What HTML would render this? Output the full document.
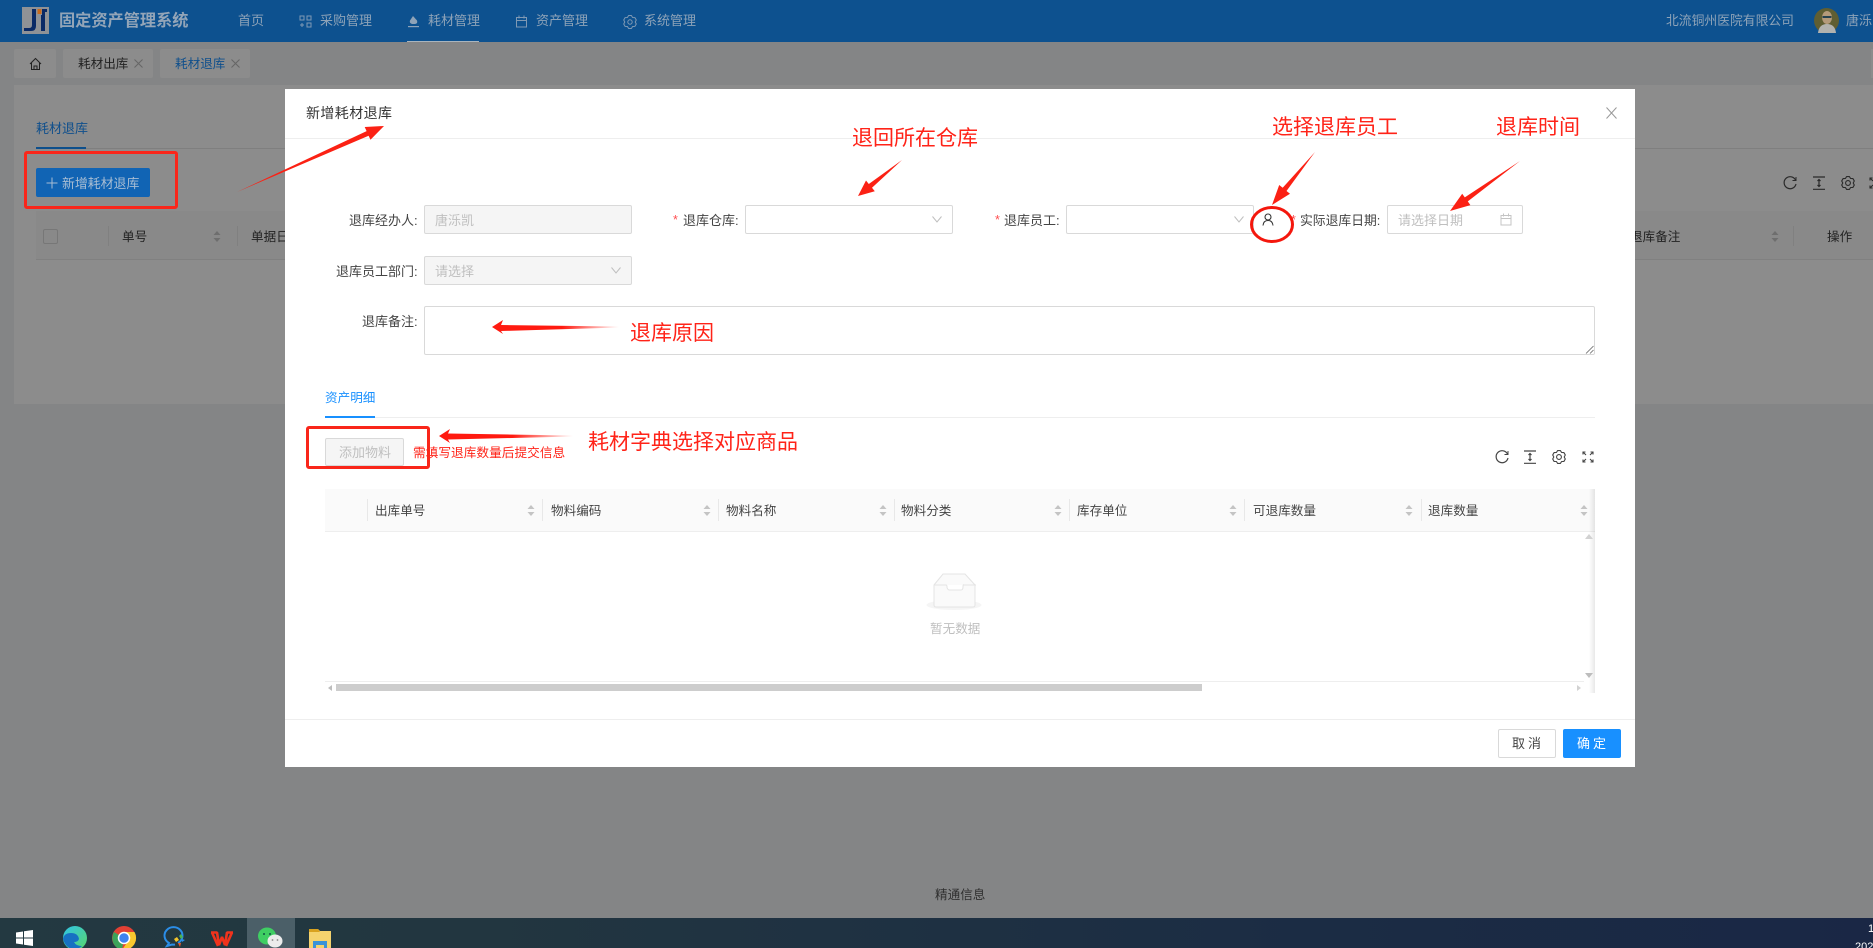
<!DOCTYPE html>
<html lang="zh"><head><meta charset="utf-8"><title>新增耗材退库</title>
<style>
html,body{margin:0;padding:0;width:1873px;height:948px;overflow:hidden}
body{background:#848586}
#w{position:absolute;left:0;top:0;width:1873px;height:948px;overflow:hidden;background:#848586;font-family:"Liberation Sans","Noto Sans CJK SC",sans-serif;font-size:12.6px;color:#333;filter:blur(.3px)}
.a{position:absolute;box-sizing:border-box}
.t{position:absolute;white-space:nowrap;line-height:16px;height:16px}
.n{color:#8ea3b8;font-size:13px}
.b{color:#3a3a3a}
.ctl{position:absolute;box-sizing:border-box;border:1px solid #d9d9d9;border-radius:2px;background:#fff}
.dis{background:#f5f5f5}
.m{color:#444;font-size:13px}
.r{color:#ff2318;font-size:21px;line-height:26px;height:26px}
.ph{color:#bfbfbf;font-size:13px}
.s{color:#ff4d4f}
svg{position:absolute;overflow:visible}
</style></head><body><div id="w">

<!-- header -->
<div class="a" style="left:0;top:0;width:1873px;height:42px;background:#0d518f"></div>
<svg style="left:22px;top:7px" width="27" height="27" viewBox="0 0 27 27"><rect width="27" height="27" fill="#8f9296"/><path d="M10 2h4v17q0 5-5 5H2v-3h5q3 0 3-3z" fill="#0a2a66"/><rect x="15.500" y="2" width="4" height="5" fill="#c96a1c"/><path d="M20 2h5v3h-2v19h-4V8h1z" fill="#0a2a66"/></svg>
<div class="t" style="left:59px;top:13px;font-size:16.200px;font-weight:bold;color:#93a5b8">固定资产管理系统</div>
<div class="t n" style="left:238px;top:13px">首页</div>
<svg style="left:299px;top:15px" width="13" height="13" viewBox="0 0 13 13" fill="none" stroke="#7f99b4"><rect x="1" y="1" width="4" height="4"/><rect x="8" y="1" width="4" height="4"/><rect x="8" y="8" width="4" height="4"/><path d="M1 10h4M3 8v4"/></svg>
<div class="t n" style="left:320px;top:13px">采购管理</div>
<svg style="left:407px;top:15px" width="13" height="13" viewBox="0 0 13 13" fill="#8ea3b8"><path d="M6 1l4 4.500q1 3-2 3.500H5Q2 8 3 5.500z"/><rect x="1" y="11" width="11" height="1.200"/></svg>
<div class="t n" style="left:428px;top:13px">耗材管理</div>
<div class="a" style="left:407px;top:41px;width:72px;height:1px;background:#a9b4bd"></div>
<svg style="left:515px;top:15px" width="13" height="13" viewBox="0 0 13 13" fill="none" stroke="#7f99b4"><rect x="1.500" y="2.500" width="10" height="9.500"/><path d="M1.500 5.500h10M4 .5v3M9 .5v3"/></svg>
<div class="t n" style="left:536px;top:13px">资产管理</div>
<svg style="left:623px;top:15px" width="14" height="14" viewBox="0 0 14 14" fill="none" stroke="#7f99b4" stroke-linejoin="round"><path d="M5.630.54H8.370L9.600 2.500 11.900 2.580 13.280 4.960 12.200 7 13.280 9.040 11.900 11.420 9.600 11.500 8.370 13.460H5.630L4.400 11.500 2.100 11.420.72 9.040 1.800 7 .72 4.960 2.100 2.580 4.400 2.500Z"/><circle cx="7" cy="7" r="2.200"/></svg>
<div class="t n" style="left:644px;top:13px">系统管理</div>
<div class="t n" style="left:1666px;top:13px;font-size:12.800px">北流铜州医院有限公司</div>
<svg style="left:1814px;top:8px" width="25" height="25" viewBox="0 0 25 25"><ellipse cx="12.500" cy="12.500" rx="12.500" ry="12.500" fill="#5f5e32"/><ellipse cx="13" cy="9.500" rx="5" ry="6.500" fill="#b49a7a"/><rect x="8.500" y="8" width="9" height="2" fill="#26424f"/><path d="M4 25q1-9 9-9t9 9z" fill="#b2b2ae"/></svg>
<div class="t n" style="left:1846px;top:13px">唐泺凯</div>

<!-- tabs -->
<div class="a" style="left:14px;top:49px;width:42px;height:29px;background:#8c8c8c;border-radius:2px"></div>
<svg style="left:29px;top:57px" width="13" height="14" viewBox="0 0 13 14" fill="none" stroke="#222"><path d="M1 7l5.500-5.500L12 7M2.500 6v6.500h8V6M5 12.500V9h3v3.500"/></svg>
<div class="a" style="left:63px;top:49px;width:90px;height:29px;background:#8c8c8c;border-radius:2px"></div>
<div class="t b" style="left:78px;top:56px;color:#222">耗材出库</div>
<svg style="left:134px;top:59px" width="9" height="9" fill="none" stroke="#666"><path d="M.5.5l8 8M8.500.5l-8 8"/></svg>
<div class="a" style="left:160px;top:49px;width:90px;height:29px;background:#8c8c8c;border-radius:2px"></div>
<div class="t" style="left:175px;top:56px;color:#0f4f8c">耗材退库</div>
<svg style="left:231px;top:59px" width="9" height="9" fill="none" stroke="#666"><path d="M.5.5l8 8M8.500.5l-8 8"/></svg>
<div class="a" style="left:1871px;top:49px;width:2px;height:29px;background:#8c8c8c"></div>

<!-- background panel -->
<div class="a" style="left:14px;top:85px;width:1859px;height:319px;background:#8c8c8c"></div>
<div class="t" style="left:36px;top:121px;color:#0f4f8c;font-size:13px">耗材退库</div>
<div class="a" style="left:36px;top:148px;width:1837px;height:1px;background:#7f7f7f"></div>
<div class="a" style="left:36px;top:147px;width:50px;height:2px;background:#0d4f8c"></div>
<div class="a" style="left:36px;top:168px;width:114px;height:29px;background:#1164b4;border-radius:2px"></div>
<svg style="left:46px;top:177px" width="12" height="12" fill="none" stroke="#a8bdd3"><path d="M6 .5v11M.5 6h11"/></svg>
<div class="t" style="left:62px;top:176px;color:#a8bdd3;font-size:12.900px">新增耗材退库</div>
<div class="a" style="left:36px;top:211px;width:1837px;height:49px;background:#898989;border-bottom:1px solid #808080"></div>
<div class="a" style="left:43px;top:229px;width:15px;height:15px;border:1px solid #777;border-radius:2px"></div>
<div class="a" style="left:108px;top:226px;width:1px;height:20px;background:#808080"></div>
<div class="t" style="left:122px;top:229px;color:#222">单号</div>
<svg style="left:213px;top:230px" width="8" height="13" fill="#6e6e6e"><path d="M4 1l3.500 4H.5zM4 12l3.500-4H.5z"/></svg>
<div class="a" style="left:237px;top:226px;width:1px;height:20px;background:#808080"></div>
<div class="t" style="left:251px;top:229px;color:#222">单据日期</div>
<div class="t" style="left:1630px;top:229px;color:#222">退库备注</div>
<svg style="left:1771px;top:230px" width="8" height="13" fill="#6e6e6e"><path d="M4 1l3.500 4H.5zM4 12l3.500-4H.5z"/></svg>
<div class="a" style="left:1793px;top:226px;width:1px;height:20px;background:#808080"></div>
<div class="t" style="left:1827px;top:229px;color:#222">操作</div>
<svg style="left:1783px;top:176px" width="14" height="14" viewBox="0 0 14 14" fill="none" stroke="#2a2a2a" stroke-width="1.200"><path d="M12.500 4A6 6 0 1 0 13 8"/><path d="M13 1v3.500H9.500" stroke-width="1"/></svg>
<svg style="left:1812px;top:176px" width="14" height="14" viewBox="0 0 14 14" fill="none" stroke="#2a2a2a" stroke-width="1.200"><path d="M1 1h12M1 13.300h12M7 3.500v7M5.500 5L7 3.500 8.500 5M5.500 9L7 10.500 8.500 9"/></svg>
<svg style="left:1841px;top:176px" width="14" height="14" viewBox="0 0 14 14" fill="none" stroke="#2a2a2a" stroke-width="1.100" stroke-linejoin="round"><path d="M5.630.54H8.370L9.600 2.500 11.900 2.580 13.280 4.960 12.200 7 13.280 9.040 11.900 11.420 9.600 11.500 8.370 13.460H5.630L4.400 11.500 2.100 11.420.72 9.040 1.800 7 .72 4.960 2.100 2.580 4.400 2.500Z"/><circle cx="7" cy="7" r="2.400"/></svg>
<svg style="left:1869px;top:177px" width="12" height="12" viewBox="0 0 12 12" fill="none" stroke="#2a2a2a" stroke-width="1.100"><path d="M1 1l3 3M1 11l3-3M1 3.500V1h2.500M1 8.500V11h2.500"/></svg>
<div class="t" style="left:935px;top:887px;color:#2f2f2f">精通信息</div>

<!-- modal -->
<div class="a" style="left:285px;top:89px;width:1350px;height:678px;background:#fff"></div>
<div class="a" style="left:285px;top:138px;width:1350px;height:1px;background:#eee"></div>
<div class="t b" style="left:306px;top:105px;font-size:14px;color:#333;letter-spacing:.4px">新增耗材退库</div>
<svg style="left:1606px;top:107px" width="11" height="12" fill="none" stroke="#999"><path d="M.5.5l10 11M10.500.5l-10 11"/></svg>

<div class="t m" style="left:349px;top:213px">退库经办人:</div>
<div class="ctl dis" style="left:424px;top:205px;width:208px;height:29px"></div>
<div class="t ph" style="left:435px;top:213px">唐泺凯</div>
<div class="t s" style="left:673px;top:212px">*</div>
<div class="t m" style="left:683px;top:213px">退库仓库:</div>
<div class="ctl" style="left:745px;top:205px;width:208px;height:29px"></div>
<svg style="left:932px;top:216px" width="10" height="7" fill="none" stroke="#bfbfbf"><path d="M.5.5L5 6 9.500.5"/></svg>
<div class="t s" style="left:995px;top:212px">*</div>
<div class="t m" style="left:1004px;top:213px">退库员工:</div>
<div class="ctl" style="left:1066px;top:205px;width:188px;height:29px"></div>
<svg style="left:1234px;top:216px" width="10" height="7" fill="none" stroke="#bfbfbf"><path d="M.5.5L5 6 9.500.5"/></svg>
<svg style="left:1262px;top:213px" width="12" height="13" viewBox="0 0 12 13" fill="none" stroke="#333" stroke-width="1.100"><circle cx="6" cy="4" r="3"/><path d="M1 12.500Q1.500 7.500 6 7.500t5 5"/></svg>
<div class="t s" style="left:1291px;top:212px">*</div>
<div class="t m" style="left:1300px;top:213px;font-size:12.800px">实际退库日期:</div>
<div class="ctl" style="left:1387px;top:205px;width:136px;height:29px"></div>
<div class="t ph" style="left:1398px;top:213px">请选择日期</div>
<svg style="left:1500px;top:213px" width="12" height="13" viewBox="0 0 12 13" fill="none" stroke="#c4c4c4"><rect x="1" y="2.500" width="10" height="9.500"/><path d="M1 5.500h10M3.500.5v3M8.500.5v3"/></svg>

<div class="t m" style="left:336px;top:264px">退库员工部门:</div>
<div class="ctl dis" style="left:424px;top:256px;width:208px;height:29px"></div>
<div class="t ph" style="left:435px;top:264px">请选择</div>
<svg style="left:611px;top:267px" width="10" height="7" fill="none" stroke="#bfbfbf"><path d="M.5.5L5 6 9.500.5"/></svg>

<div class="t m" style="left:362px;top:314px">退库备注:</div>
<div class="ctl" style="left:424px;top:306px;width:1171px;height:49px"></div>
<svg style="left:1585px;top:345px" width="9" height="9" fill="none" stroke="#666" stroke-width=".8"><path d="M1 8.500L8.500 1M5 8.500L8.500 5"/></svg>

<div class="t" style="left:325px;top:390px;color:#1890ff">资产明细</div>
<div class="a" style="left:325px;top:417px;width:1270px;height:1px;background:#eee"></div>
<div class="a" style="left:325px;top:416px;width:50px;height:2px;background:#1890ff"></div>
<div class="ctl dis" style="left:325px;top:438px;width:79px;height:28px"></div>
<div class="t ph" style="left:339px;top:445px">添加物料</div>
<div class="t" style="left:413px;top:445px;color:#ff2318;font-size:12.700px">需填写退库数量后提交信息</div>
<svg style="left:1495px;top:450px" width="14" height="14" viewBox="0 0 14 14" fill="none" stroke="#444" stroke-width="1.200"><path d="M12.500 4A6 6 0 1 0 13 8"/><path d="M13 1v3.500H9.500" stroke-width="1"/></svg>
<svg style="left:1523px;top:450px" width="14" height="14" viewBox="0 0 14 14" fill="none" stroke="#444" stroke-width="1.200"><path d="M1 1h12M1 13.300h12M7 3.500v7M5.500 5L7 3.500 8.500 5M5.500 9L7 10.500 8.500 9"/></svg>
<svg style="left:1552px;top:450px" width="14" height="14" viewBox="0 0 14 14" fill="none" stroke="#444" stroke-width="1.100" stroke-linejoin="round"><path d="M5.630.54H8.370L9.600 2.500 11.900 2.580 13.280 4.960 12.200 7 13.280 9.040 11.900 11.420 9.600 11.500 8.370 13.460H5.630L4.400 11.500 2.100 11.420.72 9.040 1.800 7 .72 4.960 2.100 2.580 4.400 2.500Z"/><circle cx="7" cy="7" r="2.400"/></svg>
<svg style="left:1582px;top:451px" width="12" height="12" viewBox="0 0 12 12" fill="none" stroke="#444" stroke-width="1.100"><path d="M1 1l3 3M11 1L8 4M1 11l3-3M11 11L8 8M1 3.500V1h2.500M11 3.500V1H8.500M1 8.500V11h2.500M11 8.500V11H8.500"/></svg>

<!-- detail table -->
<div class="a" style="left:325px;top:489px;width:1270px;height:43px;background:#fafafa;border-bottom:1px solid #eee"></div>
<div class="a" style="left:1589px;top:489px;width:6px;height:204px;background:linear-gradient(90deg,rgba(0,0,0,0),rgba(0,0,0,.09))"></div>
<div class="t" style="left:375px;top:503px;color:#444">出库单号</div>
<div class="t" style="left:551px;top:503px;color:#444">物料编码</div>
<div class="t" style="left:726px;top:503px;color:#444">物料名称</div>
<div class="t" style="left:901px;top:503px;color:#444">物料分类</div>
<div class="t" style="left:1077px;top:503px;color:#444">库存单位</div>
<div class="t" style="left:1253px;top:503px;color:#444">可退库数量</div>
<div class="t" style="left:1428px;top:503px;color:#444">退库数量</div>
<div class="a" style="left:367px;top:499px;width:1px;height:22px;background:#e8e8e8"></div>
<div class="a" style="left:542px;top:499px;width:1px;height:22px;background:#e8e8e8"></div>
<div class="a" style="left:718px;top:499px;width:1px;height:22px;background:#e8e8e8"></div>
<div class="a" style="left:894px;top:499px;width:1px;height:22px;background:#e8e8e8"></div>
<div class="a" style="left:1069px;top:499px;width:1px;height:22px;background:#e8e8e8"></div>
<div class="a" style="left:1244px;top:499px;width:1px;height:22px;background:#e8e8e8"></div>
<div class="a" style="left:1421px;top:499px;width:1px;height:22px;background:#e8e8e8"></div>
<svg style="left:527px;top:504px" width="8" height="13" fill="#c4c4c4"><path d="M4 1l3.500 4H.5zM4 12l3.500-4H.5z"/></svg>
<svg style="left:703px;top:504px" width="8" height="13" fill="#c4c4c4"><path d="M4 1l3.500 4H.5zM4 12l3.500-4H.5z"/></svg>
<svg style="left:879px;top:504px" width="8" height="13" fill="#c4c4c4"><path d="M4 1l3.500 4H.5zM4 12l3.500-4H.5z"/></svg>
<svg style="left:1054px;top:504px" width="8" height="13" fill="#c4c4c4"><path d="M4 1l3.500 4H.5zM4 12l3.500-4H.5z"/></svg>
<svg style="left:1229px;top:504px" width="8" height="13" fill="#c4c4c4"><path d="M4 1l3.500 4H.5zM4 12l3.500-4H.5z"/></svg>
<svg style="left:1405px;top:504px" width="8" height="13" fill="#c4c4c4"><path d="M4 1l3.500 4H.5zM4 12l3.500-4H.5z"/></svg>
<svg style="left:1580px;top:504px" width="8" height="13" fill="#c4c4c4"><path d="M4 1l3.500 4H.5zM4 12l3.500-4H.5z"/></svg>

<svg style="left:926px;top:572px" width="56" height="40" viewBox="0 0 56 40"><ellipse cx="28" cy="33" rx="27.500" ry="5" fill="#f5f5f5"/><path d="M8 13L17 2h22l10 11v20q0 2-2 2H10q-2 0-2-2z" fill="#fafafa" stroke="#e4e4e4"/><path d="M8 13h12q1 0 1 2t2 3h12q2 0 2-3t1-2h12" fill="#fff" stroke="#e4e4e4"/></svg>
<div class="t" style="left:930px;top:621px;color:#bfbfbf">暂无数据</div>
<svg style="left:1585px;top:534px" width="8" height="5" fill="#d2d2d2"><path d="M4 0l4 5H0z"/></svg>
<svg style="left:1585px;top:673px" width="8" height="5" fill="#bdbdbd"><path d="M0 0h8L4 5z"/></svg>
<div class="a" style="left:325px;top:681px;width:1259px;height:1px;background:#eee"></div>
<svg style="left:328px;top:685px" width="4" height="6" fill="#bdbdbd"><path d="M4 0v6L0 3z"/></svg>
<div class="a" style="left:336px;top:684px;width:866px;height:7px;background:#cdcdcd"></div>
<svg style="left:1577px;top:685px" width="4" height="6" fill="#d2d2d2"><path d="M0 0v6l4-3z"/></svg>

<!-- modal footer -->
<div class="a" style="left:285px;top:719px;width:1350px;height:1px;background:#eee"></div>
<div class="ctl" style="left:1498px;top:729px;width:58px;height:29px"></div>
<div class="t" style="left:1512px;top:736px;color:#444;letter-spacing:3px;font-size:13px">取消</div>
<div class="a" style="left:1563px;top:729px;width:58px;height:29px;background:#1890ff;border-radius:2px"></div>
<div class="t" style="left:1577px;top:736px;color:#fff;letter-spacing:3px;font-size:13px">确定</div>

<!-- annotations -->
<div class="a" style="left:24px;top:151px;width:154px;height:58px;border:3px solid #f9261a;border-radius:3px"></div>
<div class="a" style="left:306px;top:426px;width:124px;height:43px;border:3px solid #f9261a;border-radius:3px"></div>
<svg style="left:0;top:0" width="1873" height="948">
<defs>
<linearGradient id="g1" x1="0" x2="1" y1="0" y2="0"><stop offset="0" stop-color="#ff1a10"/><stop offset=".55" stop-color="#ff1a10"/><stop offset="1" stop-color="#ff1a10" stop-opacity="0"/></linearGradient>
</defs>
<g fill="#fb2114">
<polygon points="237,192 368.600,135.700 370.500,139.800 384,126 364.700,127 366.600,131.100"/>
<polygon points="902,160 872,187.800 874.800,191.300 858,196 866,180.500 868.800,184"/>
<polygon points="1315,152 1286.500,191 1290,193.800 1272,205 1279.200,185 1282.700,187.800"/>
<polygon points="1520,161 1467.800,201.400 1470.400,205.100 1450,211 1462.200,193.700 1464.800,197.400"/>
</g>
<polygon points="492,327 503,320 501,325 619,326.500 619,327.500 501,331 503,334" fill="url(#g1)"/>
<polygon points="439,436 450,429 448,433.500 573,435.500 573,436.500 448,439.500 450,443" fill="url(#g1)"/>
<ellipse cx="1272" cy="224.500" rx="20.500" ry="17" fill="none" stroke="#f4170d" stroke-width="3"/>
</svg>
<div class="t r" style="left:852px;top:126px">退回所在仓库</div>
<div class="t r" style="left:1272px;top:115px">选择退库员工</div>
<div class="t r" style="left:1496px;top:115px">退库时间</div>
<div class="t r" style="left:630px;top:321px">退库原因</div>
<div class="t r" style="left:588px;top:430px">耗材字典选择对应商品</div>

<!-- taskbar -->
<div class="a" style="left:0;top:918px;width:1873px;height:30px;background:linear-gradient(90deg,#233941 0,#223640 25%,#1b2c44 70%,#1a2745 100%)"></div>
<div class="a" style="left:247px;top:918px;width:48px;height:30px;background:#4b5f68"></div>
<svg style="left:16px;top:930px" width="17" height="16" viewBox="0 0 17 16" fill="#fff"><path d="M0 2.500l7-1V7.500H0zM8 1.300L17 0v7.500H8zM0 8.500h7v6l-7-1zM8 8.500h9V16l-9-1.300z"/></svg>
<svg style="left:62px;top:926px" width="26" height="22" viewBox="0 0 26 22"><defs><linearGradient id="e" x1="0" x2="1" y1="0" y2="1"><stop offset="0" stop-color="#2fc4e8"/><stop offset="1" stop-color="#5ad66a"/></linearGradient></defs><circle cx="13" cy="12" r="12" fill="url(#e)"/><path d="M1 13q1-6 8-6 7 0 8 6-1 3-5 3 2 4 8 4-3 3-8 3Q4 23 1 13z" fill="#1770c2"/></svg>
<svg style="left:112px;top:926px" width="24" height="22" viewBox="0 0 24 22"><circle cx="12" cy="12" r="12" fill="#e24034"/><path d="M12 12L2 6a12 12 0 0 0 8 18z" fill="#3ca35a"/><path d="M12 6h10.500A12 12 0 0 1 12 24l-2 0 6-9z" fill="#f9c82f"/><circle cx="12" cy="12" r="5.500" fill="#3e83ef" stroke="#fff" stroke-width="1.500"/></svg>
<svg style="left:161px;top:927px" width="25" height="21" viewBox="0 0 25 21" fill="none"><path d="M17 16a9 8.500 0 1 0-9 0l-2 3 5-1.500a9 8 0 0 0 3 0" stroke="#2b8ee8" stroke-width="2"/><path d="M18 9l2-2 2 3-2 2z" fill="#4bb34f"/><path d="M13 12l3-2 2 3-3 2z" fill="#f4c52b"/><path d="M21 12l3 1-3 2z" fill="#2b8ee8"/><path d="M17 16l3 0-1 4z" fill="#e8582b"/></svg>
<svg style="left:210px;top:931px" width="24" height="17" viewBox="0 0 24 17" fill="none" stroke="#f0331c" stroke-width="2.600" stroke-linejoin="bevel"><path d="M1 1.500h6L9 14l3-8 3 8 2-12.500h6M2 1.500L8 15M22 1.500L16 15"/></svg>
<svg style="left:258px;top:927px" width="26" height="21" viewBox="0 0 26 21"><ellipse cx="9" cy="9" rx="9" ry="8.500" fill="#3fce63"/><circle cx="6" cy="7" r="1" fill="#154"/><circle cx="12" cy="7" r="1" fill="#154"/><ellipse cx="17" cy="14" rx="7.500" ry="6.500" fill="#ececec"/><circle cx="14.500" cy="13" r=".9" fill="#888"/><circle cx="19.500" cy="13" r=".9" fill="#888"/></svg>
<svg style="left:309px;top:929px" width="22" height="19" viewBox="0 0 22 19"><path d="M0 0h9l2 2h11v17H0z" fill="#f5d36e"/><path d="M0 0h9l2 3H0z" fill="#d9a21f"/><path d="M4 19v-7h14v7h-3v-3H7v3z" fill="#3a93d8"/></svg>
<div class="t" style="left:1868px;top:921px;color:#fff;font-size:11px">19:00</div>
<div class="t" style="left:1855px;top:939px;color:#fff;font-size:11px">2023/1/1</div>
</div></body></html>
